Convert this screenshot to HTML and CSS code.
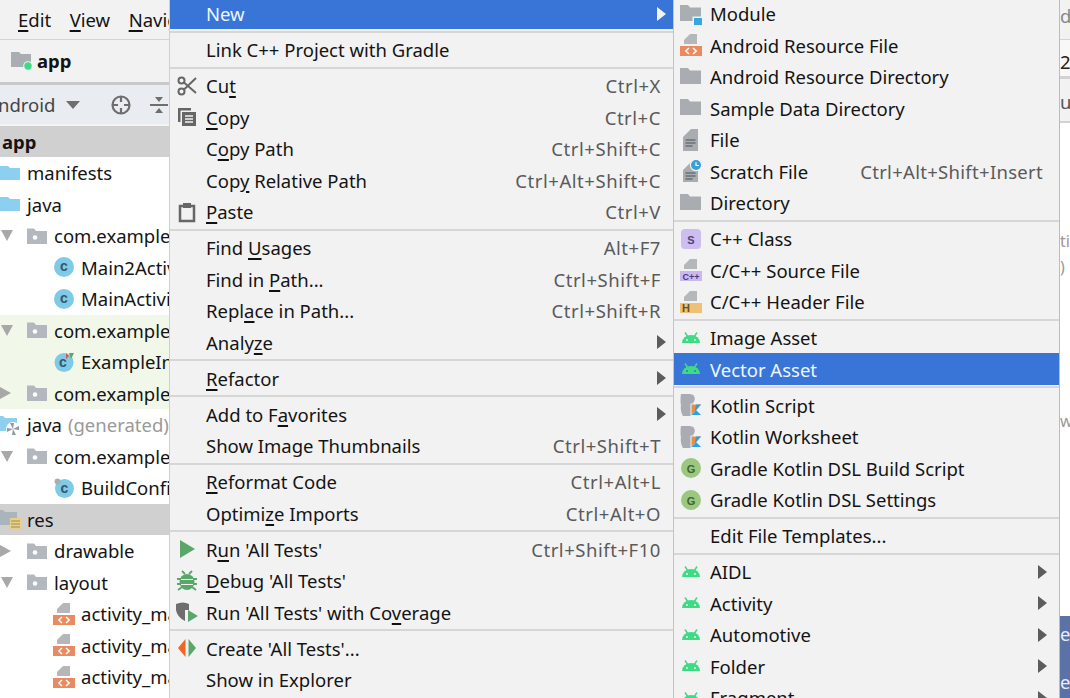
FILE: index.html
```html
<!DOCTYPE html>
<html lang="en">
<head>
<meta charset="utf-8">
<title>New Vector Asset menu</title>
<link rel="stylesheet" href="styles.css">
</head>
<body>
<svg class="defs" width="0" height="0" aria-hidden="true">
  <symbol id="i-folder" viewBox="0 0 22 22"><path d="M0 2h8l2 2.500h11V18H0z" fill="#a9adb1"/></symbol>
  <symbol id="i-blue" viewBox="-1 -1 22 22"><path d="M-1 3h9l2 2h10v12H-1z" fill="#8ccfee"/></symbol>
  <symbol id="i-pkg" viewBox="-1 -1 22 22"><path d="M0 2.500h7l2 2.500h11v13H0z" fill="#b2b8bd"/><circle cx="8" cy="11.500" r="2.300" fill="#fff"/></symbol>
  <symbol id="i-module" viewBox="0 0 22 22"><path d="M0 2h8l2 2.500h11V18H0z" fill="#a9aeb3"/><rect x="12.500" y="13.500" width="9.500" height="9.500" fill="#f2f2f2"/><rect x="14" y="15" width="8" height="8" fill="#38a7e0"/></symbol>
  <symbol id="i-app" viewBox="-1 -1 22 22"><path d="M0 1h8l2 2h10v13H0z" fill="#a9aeb3"/><circle cx="17" cy="15" r="4.800" fill="#f2f2f2"/><circle cx="17" cy="15" r="3.700" fill="#3ddc84"/></symbol>
  <symbol id="i-res" viewBox="0 0 22 22"><path d="M10 0h7v10H4V6z" fill="#b5b8bb"/><rect x="0" y="12" width="22" height="10" fill="#e98a60"/><path d="M9 14 5.800 17 9 20M13 14l3.200 3-3.200 3" fill="none" stroke="#fff" stroke-width="1.500"/></symbol>
  <symbol id="i-cpp" viewBox="0 0 22 22"><path d="M10 0h7v10H4V6z" fill="#b5b8bb"/><rect x="0" y="12" width="22" height="10" fill="#cbb8ee"/><text x="11" y="20.500" class="t-cpp">C++</text></symbol>
  <symbol id="i-h" viewBox="0 0 22 22"><path d="M10 0h7v10H4V6z" fill="#b5b8bb"/><rect x="0" y="12" width="22" height="10" fill="#eec177"/><text x="6" y="20.800" class="t-h">H</text></symbol>
  <symbol id="i-file" viewBox="0 0 22 22"><path d="M11 0h7v22H3V8z" fill="#a9adb1"/><path d="M5.500 11h10M5.500 14h10M5.500 17h7" stroke="#4d5256" stroke-width="1.200"/></symbol>
  <symbol id="i-scratch" viewBox="0 0 22 22"><path d="M11 2h7v20H3V10z" fill="#a9adb1"/><path d="M5.500 13h10M5.500 16h10M5.500 19h7" stroke="#4d5256" stroke-width="1.200"/><circle cx="16" cy="5" r="6.200" fill="#f2f2f2"/><circle cx="16" cy="5" r="5" fill="#3a9fd6"/><path d="M16 2.200V5.500H19" fill="none" stroke="#fff" stroke-width="1.100"/></symbol>
  <symbol id="i-s" viewBox="-1 -1 22 22"><rect width="20" height="20" rx="4" fill="#cdbdf0"/><text x="10" y="14.500" class="t-s">S</text></symbol>
  <symbol id="i-android" viewBox="-1 -1 22 22"><path d="M1 15a9 8 0 0 1 18 0z" fill="#3ddc84"/><path d="M4 4.500 7 9M16 4.500 13 9" stroke="#3ddc84" stroke-width="1.500"/><circle cx="6" cy="12" r="1" fill="#f2f2f2"/><circle cx="14" cy="12" r="1" fill="#f2f2f2"/></symbol>
  <symbol id="i-android-sel" viewBox="-1 -1 22 22"><path d="M1 15a9 8 0 0 1 18 0z" fill="#3ddc84"/><path d="M4 4.500 7 9M16 4.500 13 9" stroke="#3ddc84" stroke-width="1.500"/><circle cx="6" cy="12" r="1" fill="#3875d7"/><circle cx="14" cy="12" r="1" fill="#3875d7"/></symbol>
  <symbol id="i-kotlin" viewBox="0 0 23 23"><path d="M1 0q8-1 13 1 3 4 0 8-2 3 0 6l-2 8H3q-3-5-2-11-1-5 0-12z" fill="#a9adb1"/><path d="M11 23V10h12v13z" fill="#f2f2f2"/><path d="M12 11h10l-10 11z" fill="#f08a3c"/><path d="M12 22l5-5 5 5z" fill="#2f9fe0"/><path d="M17 11h5l-7 8z" fill="#2f9fe0"/></symbol>
  <symbol id="i-gradle" viewBox="-1 -1 22 22"><circle cx="10" cy="10" r="10" fill="#9cc77e"/><text x="10" y="14.500" class="t-g">G</text></symbol>
  <symbol id="i-cut" viewBox="-1 -1 22 22"><g fill="none" stroke="#666" stroke-width="2"><circle cx="4.500" cy="4.500" r="3"/><circle cx="4.500" cy="15.500" r="3"/><path d="M7 6.500 19 17M7 13.500 19 2"/></g></symbol>
  <symbol id="i-copy" viewBox="-1 -1 22 22"><path d="M1 1h13v2.500H3.500V15H1z" fill="#666"/><path d="M5 5h14v14H5z" fill="#666"/><path d="M8 9h8M8 12h8M8 15h8" stroke="#f2f2f2" stroke-width="1.300"/></symbol>
  <symbol id="i-paste" viewBox="-1 -1 22 22"><path d="M3 4h14v15H3z" fill="none" stroke="#666" stroke-width="2.500"/><rect x="6" y="1" width="8" height="5" fill="#666"/></symbol>
  <symbol id="i-run" viewBox="-1 -1 22 22"><path d="M3 1l15 9-15 9z" fill="#59a869"/></symbol>
  <symbol id="i-debug" viewBox="-1 -1 22 22"><ellipse cx="10" cy="11" rx="7.500" ry="8" fill="#59a869"/><path d="M5 0l3 3M15 0l-3 3M0 8h20M0 13h20M1 19l4-3M19 19l-4-3" stroke="#59a869" stroke-width="1.800"/><path d="M4 8.500h12M4 13.500h12" stroke="#f2f2f2" stroke-width="1.200"/></symbol>
  <symbol id="i-cover" viewBox="0 -1 22 22"><path d="M0 2q7-3 13 0v6H9v11Q1 15 0 8z" fill="#6e6e6e"/><path d="M12 8l10 6-10 6z" fill="#59a869"/></symbol>
  <symbol id="i-create" viewBox="-1 -1 22 22"><path d="M8.500 1v18L1 10z" fill="#f26522"/><path d="M11.500 1v18L19 10z" fill="#59a869"/></symbol>
  <symbol id="i-class" viewBox="-1 -1 22 22"><circle cx="10" cy="10" r="10" fill="#7fcae6"/><text x="10" y="14" class="t-c">c</text></symbol>
  <symbol id="i-class-test" viewBox="-1 -1 22 22"><circle cx="10" cy="10.500" r="9.500" fill="#7fcae6"/><text x="9" y="15" class="t-c">c</text><path d="M12 1l3 3-3 3z" fill="#e0554a"/><path d="M15 1h5l-3 6z" fill="#59a869"/></symbol>
  <symbol id="i-class-lock" viewBox="-1 -1 22 22"><circle cx="10.500" cy="10.500" r="9.500" fill="#7fcae6"/><circle cx="3.500" cy="3.500" r="3" fill="#a9adb1"/><text x="10.500" y="14.500" class="t-c">c</text></symbol>
  <symbol id="i-gen" viewBox="0 -1 22 22"><path d="M-3 1h7l2 2h12v13H-3z" fill="#8ccfee"/><circle cx="14" cy="14" r="7" fill="#fff"/><path d="M14 14 11 8h4zM14 14l6-3v4zM14 14l3 6-4 0zM14 14l-6 3v-4z" fill="#8a9aa6"/></symbol>
  <symbol id="i-resf" viewBox="0 -1 22 22"><path d="M-3 1h7l2 2h12v13H-3z" fill="#a9b4bd"/><rect x="11" y="9" width="11" height="12" fill="#e8d088"/><path d="M12 12h9M12 15h9M12 18h9" stroke="#a08c50" stroke-width="1"/></symbol>
  <symbol id="i-target" viewBox="0 0 20 20"><circle cx="10" cy="10" r="8.500" fill="none" stroke="#6e6e6e" stroke-width="2.200"/><path d="M10 2v5M10 13v5M2 10h5M13 10h5" stroke="#6e6e6e" stroke-width="2.200"/></symbol>
  <symbol id="i-collapse" viewBox="0 0 18 20"><path d="M5 2h8l-4 5zM5 18h8l-4-5z" fill="#6e6e6e"/><path d="M0 10h18" stroke="#6e6e6e" stroke-width="2"/></symbol>
</svg>

<div class="screen">
  <aside class="ide">
    <nav class="menubar"><span class="mb-item"><u>E</u>dit</span><span class="mb-item"><u>V</u>iew</span><span class="mb-item"><u>N</u>avigate</span></nav>
    <div class="crumb"><svg class="ico"><use href="#i-app"/></svg><b>app</b></div>
    <div class="toolbar"><span class="tb-title">ndroid</span><span class="tb-drop"></span><svg class="tb-target"><use href="#i-target"/></svg><svg class="tb-collapse"><use href="#i-collapse"/></svg></div>
    <ul class="tree">
      <li class="row sel head"><b>app</b></li>
      <li class="row"><svg class="ico"><use href="#i-blue"/></svg>manifests</li>
      <li class="row"><svg class="ico"><use href="#i-blue"/></svg>java</li>
      <li class="row"><span class="tw down"></span><svg class="ico"><use href="#i-pkg"/></svg>com.example.myapplication</li>
      <li class="row lv2"><svg class="ico"><use href="#i-class"/></svg>Main2Activity</li>
      <li class="row lv2"><svg class="ico"><use href="#i-class"/></svg>MainActivity</li>
      <li class="row test"><span class="tw down"></span><svg class="ico"><use href="#i-pkg"/></svg>com.example.myapplication</li>
      <li class="row lv2 test"><svg class="ico"><use href="#i-class-test"/></svg>ExampleInstrumentedTest</li>
      <li class="row test"><span class="tw right"></span><svg class="ico"><use href="#i-pkg"/></svg>com.example.myapplication</li>
      <li class="row"><svg class="ico"><use href="#i-gen"/></svg>java <span class="dim">(generated)</span></li>
      <li class="row"><span class="tw down"></span><svg class="ico"><use href="#i-pkg"/></svg>com.example.myapplication</li>
      <li class="row lv2"><svg class="ico"><use href="#i-class-lock"/></svg>BuildConfig</li>
      <li class="row sel"><svg class="ico"><use href="#i-resf"/></svg>res</li>
      <li class="row"><span class="tw right"></span><svg class="ico"><use href="#i-pkg"/></svg>drawable</li>
      <li class="row"><span class="tw down"></span><svg class="ico"><use href="#i-pkg"/></svg>layout</li>
      <li class="row lv2"><svg class="ico"><use href="#i-res"/></svg>activity_main.xml</li>
      <li class="row lv2"><svg class="ico"><use href="#i-res"/></svg>activity_main2.xml</li>
      <li class="row lv2"><svg class="ico"><use href="#i-res"/></svg>activity_main3.xml</li>
    </ul>
  </aside>

  <div class="menu menu-a">
    <div class="item on"><span class="lab">New</span><span class="sub"></span></div>
    <div class="sep"></div>
    <div class="item"><span class="lab">Link C++ Project with Gradle</span></div>
    <div class="sep"></div>
    <div class="item"><svg class="ico"><use href="#i-cut"/></svg><span class="lab">Cu<u>t</u></span><span class="key">Ctrl+X</span></div>
    <div class="item"><svg class="ico"><use href="#i-copy"/></svg><span class="lab"><u>C</u>opy</span><span class="key">Ctrl+C</span></div>
    <div class="item"><span class="lab">C<u>o</u>py Path</span><span class="key">Ctrl+Shift+C</span></div>
    <div class="item"><span class="lab">Cop<u>y</u> Relative Path</span><span class="key">Ctrl+Alt+Shift+C</span></div>
    <div class="item"><svg class="ico"><use href="#i-paste"/></svg><span class="lab"><u>P</u>aste</span><span class="key">Ctrl+V</span></div>
    <div class="sep"></div>
    <div class="item"><span class="lab">Find <u>U</u>sages</span><span class="key">Alt+F7</span></div>
    <div class="item"><span class="lab">Find in <u>P</u>ath...</span><span class="key">Ctrl+Shift+F</span></div>
    <div class="item"><span class="lab">Repl<u>a</u>ce in Path...</span><span class="key">Ctrl+Shift+R</span></div>
    <div class="item"><span class="lab">Analy<u>z</u>e</span><span class="sub"></span></div>
    <div class="sep"></div>
    <div class="item"><span class="lab"><u>R</u>efactor</span><span class="sub"></span></div>
    <div class="sep"></div>
    <div class="item"><span class="lab">Add to F<u>a</u>vorites</span><span class="sub"></span></div>
    <div class="item"><span class="lab">Show Image Thumbnails</span><span class="key">Ctrl+Shift+T</span></div>
    <div class="sep"></div>
    <div class="item"><span class="lab"><u>R</u>eformat Code</span><span class="key">Ctrl+Alt+L</span></div>
    <div class="item"><span class="lab">Optimi<u>z</u>e Imports</span><span class="key">Ctrl+Alt+O</span></div>
    <div class="sep"></div>
    <div class="item"><svg class="ico"><use href="#i-run"/></svg><span class="lab">R<u>u</u>n 'All Tests'</span><span class="key">Ctrl+Shift+F10</span></div>
    <div class="item"><svg class="ico"><use href="#i-debug"/></svg><span class="lab"><u>D</u>ebug 'All Tests'</span></div>
    <div class="item"><svg class="ico"><use href="#i-cover"/></svg><span class="lab">Run 'All Tests' with Co<u>v</u>erage</span></div>
    <div class="sep"></div>
    <div class="item"><svg class="ico"><use href="#i-create"/></svg><span class="lab">Create 'All Tests'...</span></div>
    <div class="item"><span class="lab">Show in Explorer</span></div>
  </div>

  <div class="menu menu-b">
    <div class="item"><svg class="ico"><use href="#i-module"/></svg><span class="lab">Module</span></div>
    <div class="item"><svg class="ico"><use href="#i-res"/></svg><span class="lab">Android Resource File</span></div>
    <div class="item"><svg class="ico"><use href="#i-folder"/></svg><span class="lab">Android Resource Directory</span></div>
    <div class="item"><svg class="ico"><use href="#i-folder"/></svg><span class="lab">Sample Data Directory</span></div>
    <div class="item"><svg class="ico"><use href="#i-file"/></svg><span class="lab">File</span></div>
    <div class="item"><svg class="ico"><use href="#i-scratch"/></svg><span class="lab">Scratch File</span><span class="key">Ctrl+Alt+Shift+Insert</span></div>
    <div class="item"><svg class="ico"><use href="#i-folder"/></svg><span class="lab">Directory</span></div>
    <div class="sep"></div>
    <div class="item"><svg class="ico"><use href="#i-s"/></svg><span class="lab">C++ Class</span></div>
    <div class="item"><svg class="ico"><use href="#i-cpp"/></svg><span class="lab">C/C++ Source File</span></div>
    <div class="item"><svg class="ico"><use href="#i-h"/></svg><span class="lab">C/C++ Header File</span></div>
    <div class="sep"></div>
    <div class="item"><svg class="ico"><use href="#i-android"/></svg><span class="lab">Image Asset</span></div>
    <div class="item on"><svg class="ico"><use href="#i-android-sel"/></svg><span class="lab">Vector Asset</span></div>
    <div class="sep"></div>
    <div class="item"><svg class="ico"><use href="#i-kotlin"/></svg><span class="lab">Kotlin Script</span></div>
    <div class="item"><svg class="ico"><use href="#i-kotlin"/></svg><span class="lab">Kotlin Worksheet</span></div>
    <div class="item"><svg class="ico"><use href="#i-gradle"/></svg><span class="lab">Gradle Kotlin DSL Build Script</span></div>
    <div class="item"><svg class="ico"><use href="#i-gradle"/></svg><span class="lab">Gradle Kotlin DSL Settings</span></div>
    <div class="sep"></div>
    <div class="item"><span class="lab">Edit File Templates...</span></div>
    <div class="sep"></div>
    <div class="item"><svg class="ico"><use href="#i-android"/></svg><span class="lab">AIDL</span><span class="sub"></span></div>
    <div class="item"><svg class="ico"><use href="#i-android"/></svg><span class="lab">Activity</span><span class="sub"></span></div>
    <div class="item"><svg class="ico"><use href="#i-android"/></svg><span class="lab">Automotive</span><span class="sub"></span></div>
    <div class="item"><svg class="ico"><use href="#i-android"/></svg><span class="lab">Folder</span><span class="sub"></span></div>
    <div class="item"><svg class="ico"><use href="#i-android"/></svg><span class="lab">Fragment</span><span class="sub"></span></div>
  </div>

  <div class="editor">
    <div class="ed-bar ed-menu">d'</div>
    <div class="ed-bar ed-path">2</div>
    <div class="ed-bar ed-tabs">u</div>
    <div class="ed-code">
      <p class="ln ln-a">ti</p>
      <p class="ln ln-b">)</p>
      <p class="ln ln-c">w</p>
    </div>
    <div class="ed-blue"><p class="bl">ec</p><p class="bl bl-2">e</p></div>
  </div>
</div>
</body>
</html>
```
FILE: styles.css
```css
* { box-sizing: border-box; }
html, body { margin: 0; padding: 0; background: #fff; }
body { font-family: "Noto Sans", "Open Sans", sans-serif; font-size: 18.500px; color: #141414; }
.defs { position: absolute; }
u { text-decoration-thickness: 2px; text-underline-offset: 3px; text-decoration-color: #111; }

.screen { display: flex; width: 1070px; height: 698px; overflow: hidden; }

/* IDE panel */
.ide { flex: 0 0 169px; width: 169px; overflow: hidden; white-space: nowrap; display: flex; flex-direction: column; }
.menubar { height: 40px; flex: none; background: #f2f2f2; border-bottom: 1px solid #d4d4d4; display: flex; align-items: center; padding-left: 18px; gap: 18.500px; padding-bottom: 1px; }
.crumb { height: 45px; flex: none; background: #f2f2f2; border-bottom: 3px solid #c9c9c9; display: flex; align-items: center; padding-left: 10px; gap: 5px; padding-bottom: 1px; }
.crumb .ico { width: 22px; height: 22px; }
.toolbar { height: 41px; flex: none; background: #e9ecf1; border-bottom: 2px solid #f4f4f4; display: flex; align-items: center; }
.tb-title { width: 66px; flex: none; color: #444; margin-left: -2px; }
.tb-drop { flex: none; width: 0; height: 0; margin-left: 2px; border-left: 7px solid transparent; border-right: 7px solid transparent; border-top: 8px solid #6e6e6e; }
.tb-target { flex: none; width: 20px; height: 20px; margin-left: 31px; }
.tb-collapse { flex: none; width: 18px; height: 20px; margin-left: 19px; }

.tree { list-style: none; margin: -0.500px 0 0; padding: 0; }
.row { height: 31.500px; display: flex; align-items: center; gap: 7px; }
.row .ico { flex: none; width: 22px; height: 22px; margin: 0 -1px; }
.head { padding-left: 2px; }
.lv2 { padding-left: 54px; }
.sel { background: #d0d0d0; }
.test { background: #f1f7e9; }
.dim { color: #9a9a9a; margin-left: -1px; }
.tw { flex: none; width: 20px; display: flex; }
.tw.down::before { content: ""; border-left: 6px solid transparent; border-right: 6px solid transparent; border-top: 11px solid #a8a8a8; margin-left: 1px; }
.tw.right::before { content: ""; border-top: 6px solid transparent; border-bottom: 6px solid transparent; border-left: 11px solid #a8a8a8; }

/* Menus */
.menu { flex: none; height: 720px; margin-top: -2.250px; background: #f2f2f2; display: flex; flex-direction: column; white-space: nowrap; }
.menu-a { width: 504px; border-left: 1px solid #cfcfcf; }
.menu-b { width: 387px; border-left: 1px solid #c4c4c4; border-right: 1px solid #bcbcbc; }
.item { height: 31.500px; flex: none; display: flex; align-items: center; padding-left: 36px; position: relative; }
.item .ico { width: 22px; height: 22px; position: absolute; left: 6px; top: 4.750px; }
.lab { flex: 1 1 auto; }
.key { color: #5a5a5a; flex: none; letter-spacing: 0.550px; }
.menu-a .key { padding-right: 12px; }
.menu-b .key { padding-right: 16px; letter-spacing: 0.300px; }
.sub { flex: none; width: 0; height: 0; border-top: 7px solid transparent; border-bottom: 7px solid transparent; border-left: 9px solid #5c5c5c; }
.menu-a .sub { margin-right: 7px; }
.menu-b .sub { margin-right: 12px; }
.item.on { background: #3875d7; color: #eef6ff; }
.item.on .sub { border-left-color: #f4f4f4; }
.sep { flex: none; height: 4.500px; display: flex; align-items: center; }
.sep::before { content: ""; flex: 1; height: 2px; background: #d6d6d6; }

/* SVG small labels */
.t-cpp { font: 700 9px "Liberation Sans", sans-serif; fill: #4a3a80; text-anchor: middle; }
.t-h { font: 700 11px "Liberation Sans", sans-serif; fill: #6a5020; text-anchor: middle; }
.t-s { font: 700 11px "Liberation Sans", sans-serif; fill: #50447a; text-anchor: middle; }
.t-g { font: 700 11px "Liberation Sans", sans-serif; fill: #44603a; text-anchor: middle; }
.t-c { font: 700 14px "Liberation Sans", sans-serif; fill: #36586c; text-anchor: middle; }

/* Right strip */
.editor { flex: 1; min-width: 0; display: flex; flex-direction: column; overflow: hidden; white-space: nowrap; }
.ed-bar { flex: none; overflow: hidden; }
.ed-menu { height: 40px; background: #f2f2f2; border-bottom: 1px solid #d4d4d4; color: #888; line-height: 32px; }
.ed-path { height: 39px; background: #f8f8f8; border-bottom: 3px solid #d2d2d2; color: #222; line-height: 44px; }
.ed-tabs { height: 44px; background: #f2f2f2; border-bottom: 2px solid #d2d2d2; color: #555; line-height: 46px; }
.ed-code { flex: 1; background: #fff; color: #999; }
.ln { margin: 0; font-size: 16px; line-height: 22px; }
.ln-a { margin-top: 107px; }
.ln-b { margin-top: 4px; }
.ln-c { margin-top: 132px; }
.ed-blue { flex: none; height: 82px; background: #5b72a6; color: #e8eefa; padding-top: 6px; }
.bl { margin: 0; line-height: 24px; }
.bl-2 { margin-top: 24px; }
```
